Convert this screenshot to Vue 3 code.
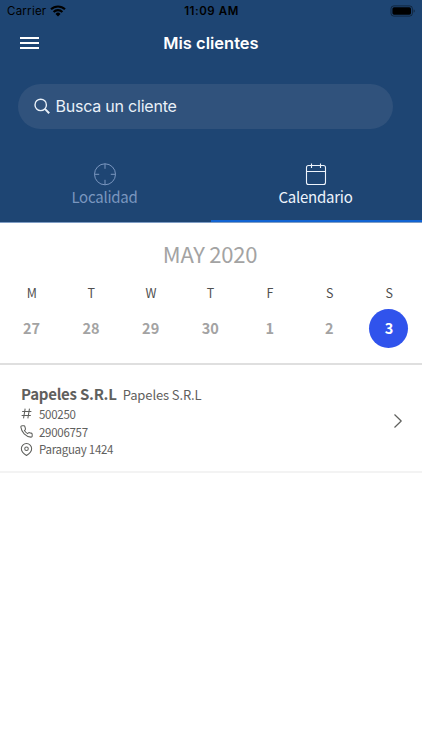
<template>
  <div class="screen">
    <header class="header">
      <div class="status-bar">
        <div class="status-left">
          <span class="carrier">Carrier</span>
          <svg class="wifi" width="16" height="12" viewBox="0 0 16 12">
            <path d="M1 4.3a10 10 0 0 1 14 0M3.6 7a6.2 6.2 0 0 1 8.8 0" fill="none" stroke="#000" stroke-width="2.1" />
            <path d="M8 11.4 5.5 8.9a3.5 3.5 0 0 1 5 0z" fill="#000" />
          </svg>
        </div>
        <span class="time">11:09 AM</span>
        <div class="status-right">
          <svg width="26" height="12" viewBox="0 0 26 12">
            <rect x="1" y="0.9" width="21.4" height="10.2" rx="2.8" fill="none" stroke="#000" stroke-opacity="0.45" />
            <rect x="2.4" y="2.3" width="18.6" height="7.4" rx="1.6" fill="#000" />
            <path d="M23.7 4.3v3.4c1.3-.5 1.3-2.9 0-3.4z" fill="#000" fill-opacity="0.5" />
          </svg>
        </div>
      </div>

      <div class="nav">
        <button type="button" class="menu-btn" aria-label="Menu">
          <span></span>
          <span></span>
          <span></span>
        </button>
        <h1 class="title">Mis clientes</h1>
      </div>

      <div class="search">
        <svg width="17" height="17" viewBox="0 0 17 17" fill="none" stroke="#e9f0f8">
          <circle cx="6.7" cy="6.9" r="5.7" stroke-width="1.4" />
          <path d="M10.9 10.9 15.2 15.3" stroke-width="2" />
        </svg>
        <span>Busca un cliente</span>
      </div>

      <div class="tabs">
        <div
          v-for="tab in tabs"
          :key="tab.id"
          class="tab"
          :class="{ active: activeTab === tab.id }"
          @click="activeTab = tab.id"
        >
          <svg v-if="tab.id === 'place'" width="24" height="24" viewBox="0 0 24 24" fill="none" stroke="currentColor">
            <circle cx="12" cy="12.3" r="10.5" />
            <path d="M12 1.8v5M12 17.8v5M1.5 12.3h4.7M17.8 12.3h4.7" />
          </svg>
          <svg v-else width="24" height="24" viewBox="0 0 24 24" fill="none" stroke="currentColor" stroke-width="1.1">
            <rect x="2.5" y="3.5" width="19" height="19" rx="2" />
            <path d="M2.5 9.5h19M7.5 1.5V6M16.5 1.5V6" />
          </svg>
          <span class="tab-label">{{ tab.label }}</span>
        </div>
      </div>
    </header>

    <section class="calendar">
      <div class="month">MAY 2020</div>
      <div class="week">
        <div v-for="(day, i) in days" :key="i" class="day" @click="selected = day.date">
          <span class="day-name">{{ day.name }}</span>
          <span class="day-date" :class="{ selected: selected === day.date }">{{ day.date }}</span>
        </div>
      </div>
    </section>

    <ul class="clients">
      <li v-for="client in clients" :key="client.code" class="client">
        <div>
          <div class="client-name">
            <strong>{{ client.name }}</strong>
            <span>{{ client.alias }}</span>
          </div>
          <div class="detail">
            <svg width="13" height="13" viewBox="0 0 24 24">
              <path d="M4 8.5h17M3 15.5h17M9.5 3l-3 18M17.5 3l-3 18" />
            </svg>
            {{ client.code }}
          </div>
          <div class="detail">
            <svg width="13" height="13" viewBox="0 0 24 24">
              <path d="M22.5 17v3.2a2.2 2.2 0 0 1-2.4 2.2A21.5 21.5 0 0 1 1.6 3.9 2.2 2.2 0 0 1 3.8 1.5H7a2.2 2.2 0 0 1 2.2 1.9c.15 1.1.4 2.1.8 3.1a2.2 2.2 0 0 1-.5 2.3L8.1 10.2a17.5 17.5 0 0 0 5.9 5.8l1.4-1.3a2.2 2.2 0 0 1 2.3-.5c1 .4 2 .6 3 .8a2.2 2.2 0 0 1 1.8 2z" />
            </svg>
            {{ client.phone }}
          </div>
          <div class="detail">
            <svg width="13" height="13" viewBox="0 0 24 24">
              <path d="M21.5 10.5c0 6.5-9.5 12.5-9.5 12.5S2.5 17 2.5 10.5a9.5 9.5 0 0 1 19 0z" />
              <circle cx="12" cy="10.5" r="3.3" />
            </svg>
            {{ client.address }}
          </div>
        </div>
        <svg class="chevron" width="10" height="16" viewBox="0 0 10 16">
          <path d="M1.5 1.5 8.2 8 1.5 14.5" />
        </svg>
      </li>
    </ul>
  </div>
</template>

<script setup>
import { ref } from 'vue';

const tabs = [
  { id: 'place', label: 'Localidad' },
  { id: 'calendar', label: 'Calendario' }
];
const activeTab = ref('calendar');

const days = [
  { name: 'M', date: 27 },
  { name: 'T', date: 28 },
  { name: 'W', date: 29 },
  { name: 'T', date: 30 },
  { name: 'F', date: 1 },
  { name: 'S', date: 2 },
  { name: 'S', date: 3 }
];
const selected = ref(3);

const clients = [
  { name: 'Papeles S.R.L', alias: 'Papeles S.R.L', code: '500250', phone: '29006757', address: 'Paraguay 1424' }
];
</script>

<style>
body {
  background: #fff;
}
</style>

<style scoped>
.screen {
  height: 750px;
  overflow: hidden;
  background: #fff;
  font-family: "Noto Sans CJK SC", "Noto Sans", sans-serif;
}
.header {
  box-sizing: border-box;
  height: 223px;
  border-bottom: 1px solid #7f9dc4;
  background: #1e4573;
  font-family: Inter, sans-serif;
}
.status-bar {
  display: grid;
  grid-template-columns: 1fr auto 1fr;
  align-items: center;
  height: 21px;
  padding: 0 6px 0 7px;
  color: #000;
  font-size: 11.5px;
  line-height: 22px;
}
.status-left {
  display: flex;
  align-items: center;
  gap: 4px;
}
.carrier {
  letter-spacing: 0.25px;
}
.time {
  font-weight: 600;
  letter-spacing: 0.55px;
}
.status-right {
  display: flex;
  justify-content: flex-end;
}
.nav {
  display: grid;
  grid-template-columns: 60px 1fr 60px;
  align-items: center;
  height: 44px;
}
.menu-btn {
  display: flex;
  flex-direction: column;
  gap: 3px;
  width: 19px;
  margin-left: 20px;
  padding: 0;
  border: 0;
  background: none;
}
.menu-btn span {
  height: 2px;
  background: #fff;
}
.title {
  margin: 0;
  color: #fff;
  font-size: 16.5px;
  font-weight: 600;
  text-align: center;
}
.search {
  display: flex;
  align-items: center;
  gap: 4.5px;
  box-sizing: border-box;
  height: 45px;
  margin: 19px 29px 0 18px;
  padding: 0 0 1px 16px;
  border-radius: 23px;
  background: #30527c;
  color: #e9f0f8;
  font-size: 16px;
  letter-spacing: -0.22px;
}
.tabs {
  display: flex;
  height: 93px;
}
.tab {
  flex: 1;
  display: flex;
  flex-direction: column;
  align-items: center;
  box-sizing: border-box;
  padding: 33px 2px 0 0;
  border-bottom: 2px solid transparent;
  color: #7a96bf;
  font-family: "Noto Sans CJK SC", "Noto Sans", sans-serif;
}
.tab.active {
  border-bottom-color: #1263d2;
  color: #eef4fc;
}
.tab-label {
  font-size: 15px;
  line-height: 22px;
  letter-spacing: -0.25px;
}
.calendar {
  box-sizing: border-box;
  height: 142px;
  padding-top: 14px;
  border-bottom: 2px solid #dfdfdf;
}
.month {
  padding-right: 2px;
  color: #a3a3a3;
  font-size: 22px;
  line-height: 32px;
  text-align: center;
  letter-spacing: -0.25px;
}
.week {
  display: grid;
  grid-template-columns: repeat(7, 1fr);
  padding: 14px 3px 0 2px;
}
.day {
  display: flex;
  flex-direction: column;
  align-items: center;
  gap: 6px;
}
.day-name {
  color: #4f4f4f;
  font-size: 12.5px;
  line-height: 20px;
}
.day-date {
  width: 39px;
  height: 39px;
  margin-right: 0.5px;
  border-radius: 50%;
  color: #a3a3a3;
  font-size: 14.5px;
  font-weight: 700;
  line-height: 38px;
  text-align: center;
}
.day-date.selected {
  background: #3053ec;
  color: #fff;
}
.clients {
  margin: 0;
  padding: 0;
  list-style: none;
}
.client {
  display: flex;
  align-items: center;
  justify-content: space-between;
  box-sizing: border-box;
  height: 108px;
  padding: 6px 19px 0 20px;
  border-bottom: 2px solid #f3f3f3;
  color: #5f605d;
}
.client-name {
  display: flex;
  align-items: baseline;
  gap: 6px;
  margin-left: 1px;
  font-size: 13px;
  line-height: 20px;
  letter-spacing: -0.12px;
}
.client-name strong {
  font-size: 15px;
  letter-spacing: -0.25px;
}
.detail {
  display: flex;
  align-items: center;
  gap: 6px;
  height: 17.6px;
  font-size: 11.5px;
  letter-spacing: -0.28px;
}
.detail svg,
.chevron {
  fill: none;
  stroke: #5f605d;
  stroke-width: 1.9;
  stroke-linejoin: round;
}
.chevron {
  stroke-width: 1.2;
}
</style>
